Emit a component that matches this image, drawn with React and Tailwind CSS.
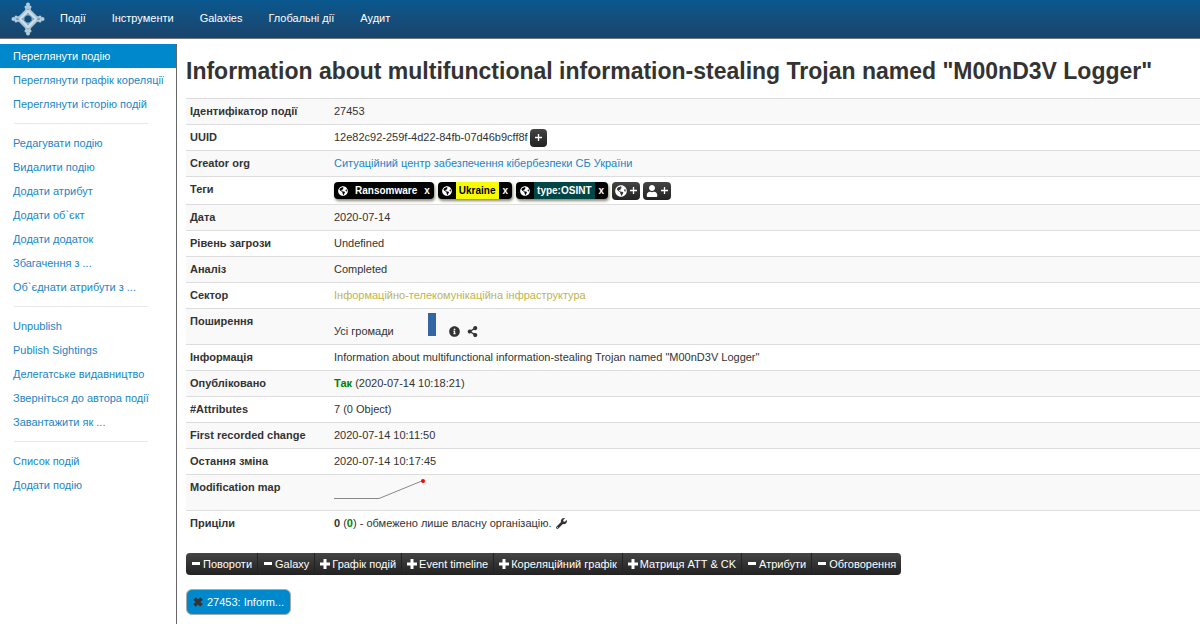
import React from 'react'
import { FaGlobeAmericas, FaInfoCircle, FaShareAlt, FaUser, FaWrench } from 'react-icons/fa'

const nav = ['Події', 'Інструменти', 'Galaxies', 'Глобальні дії', 'Аудит']

const menu = [
  ['Переглянути подію', 'Переглянути графік кореляції', 'Переглянути історію подій'],
  ['Редагувати подію', 'Видалити подію', 'Додати атрибут', 'Додати об`єкт', 'Додати додаток', 'Збагачення з ...', 'Об`єднати атрибути з ...'],
  ['Unpublish', 'Publish Sightings', 'Делегатське видавництво', 'Зверніться до автора події', 'Завантажити як ...'],
  ['Список подій', 'Додати подію'],
]

const tags = [
  { name: 'Ransomware', color: 'bg-black text-white' },
  { name: 'Ukraine', color: 'bg-[#f8fc00] text-black' },
  { name: 'type:OSINT', color: 'bg-[#004646] text-white' },
]

const toggles = [
  { name: 'Повороти', open: true },
  { name: 'Galaxy', open: true },
  { name: 'Графік подій' },
  { name: 'Event timeline' },
  { name: 'Кореляційний графік' },
  { name: 'Матриця ATT & CK' },
  { name: 'Атрибути', open: true },
  { name: 'Обговорення', open: true },
]

const title = 'Information about multifunctional information-stealing Trojan named "M00nD3V Logger"'

function Logo() {
  return (
    <svg viewBox="0 0 34 34" className="size-[34px]" aria-hidden="true">
      {/* diamond body, then the knobs on its four tips */}
      <path d="M15 4h4l1 4 6 6 4 1v4l-4 1-6 6-1 4h-4l-1-4-6-6-4-1v-4l4-1 6-6z" fill="#a9c4d4" />
      <g fill="#b4ccda">
        <circle cx="17" cy="2.500" r="2" /><circle cx="17" cy="31.500" r="2" />
        <circle cx="2.500" cy="17" r="2" /><circle cx="31.500" cy="17" r="2" />
        <circle cx="15" cy="5" r="1.500" /><circle cx="19" cy="5" r="1.500" />
        <circle cx="15" cy="29" r="1.500" /><circle cx="19" cy="29" r="1.500" />
        <circle cx="5" cy="15" r="1.500" /><circle cx="5" cy="19" r="1.500" />
        <circle cx="29" cy="15" r="1.500" /><circle cx="29" cy="19" r="1.500" />
      </g>
      <path d="M17 7v6M17 21v6M5 17h8M21 17h8" stroke="#57809f" />
      <path d="M17 9l8 8-8 8-8-8z" fill="none" stroke="#cfdfe8" strokeWidth="2" />
      <path d="M15.500 13h3l2.500 2.500v3L18.500 21h-3L13 18.500v-3z" fill="#0c4c7e" stroke="#8eafc4" />
    </svg>
  )
}

function Plus() {
  return <svg viewBox="0 0 10 10" className="size-[10px] shrink-0" aria-hidden="true"><path d="M5 0v10M0 5h10" stroke="currentColor" strokeWidth="3" /></svg>
}

function Minus() {
  return <svg viewBox="0 0 10 10" className="size-[10px] shrink-0" aria-hidden="true"><path d="M1 4.500h8" stroke="currentColor" strokeWidth="3" /></svg>
}

function Cross() {
  return <svg viewBox="0 0 10 10" className="size-[10px] shrink-0 text-[#333]" aria-hidden="true"><path d="M1.500 1.500l7 7M8.500 1.500l-7 7" stroke="currentColor" strokeWidth="3.500" /></svg>
}

function Row({ label, children }) {
  return (
    <tr className="border-t border-[#ddd] odd:bg-[#f9f9f9]">
      <th scope="row" className="w-[144px] px-1 py-1 text-left align-top font-bold">{label}</th>
      <td className="px-1 py-1 align-top">{children}</td>
    </tr>
  )
}

function DarkButton({ label, icon }) {
  return (
    <button aria-label={label} className="flex h-[18px] min-w-[17px] items-center justify-center gap-[3px] rounded bg-linear-to-b from-[#444] to-[#222] px-[3px] text-white">
      {icon}
      <svg viewBox="0 0 7 7" className="size-[7px]" aria-hidden="true"><path d="M3.500 0v7M0 3.500h7" stroke="currentColor" strokeWidth="1.300" /></svg>
    </button>
  )
}

function Tag({ name, color }) {
  return (
    <span className="flex h-[17px] items-stretch overflow-hidden rounded-sm bg-black text-[10px] leading-[17px] font-bold text-white shadow-[1px_2px_3px_#887]">
      <span className="flex items-center px-1"><FaGlobeAmericas size={10} /></span>
      <a href="#" className={`px-[3px] ${color}`}>{name}</a>
      <button aria-label={`Remove ${name}`} className="px-1">x</button>
    </span>
  )
}

export default function App() {
  return (
    <div className="flex min-h-screen flex-col bg-white font-['Liberation_Sans',Arial,sans-serif] text-[11px] leading-[17px] text-[#333]">
      <header className="flex h-[39px] shrink-0 items-center border-b border-[#777] bg-linear-to-b from-[#08588f] to-[#19446b] pl-[11px] text-white">
        <a href="#" aria-label="Home"><Logo /></a>
        <nav className="flex gap-[26px] pb-[2px] pl-[15px]">
          {nav.map(n => <a key={n} href="#">{n}</a>)}
        </nav>
      </header>

      <div className="flex flex-1 pt-[5px]">
        <aside className="w-[177px] shrink-0 border-r border-[#666]">
          {menu.map((group, g) => (
            <React.Fragment key={g}>
              {g > 0 && <hr className="my-[7px] mr-7 ml-[14px] border-[#e8e8e8]" />}
              <ul>
                {group.map((item, i) => (
                  <li key={item}>
                    <a href="#" className={`block h-6 pl-[13px] leading-6 whitespace-nowrap ${g === 0 && i === 0 ? 'bg-[#0088cc] text-white' : 'text-[#1a86c8]'}`}>{item}</a>
                  </li>
                ))}
              </ul>
            </React.Fragment>
          ))}
        </aside>

        <main className="min-w-0 flex-1 pl-[9px]">
          <h1 className="py-[11px] text-[23px] leading-8 font-bold">{title}</h1>

          <table className="w-full border-collapse">
            <tbody>
              <Row label="Ідентифікатор події">27453</Row>
              <Row label="UUID">
                <div className="flex h-[17px] items-center gap-[2px]">
                  12e82c92-259f-4d22-84fb-07d46b9cff8f
                  <DarkButton label="Extend event" />
                </div>
              </Row>
              <Row label="Creator org"><a href="#" className="text-[#1a86c8]">Ситуаційний центр забезпечення кібербезпеки СБ України</a></Row>
              <Row label="Теги">
                <div className="flex h-[19px] items-center gap-1">
                  {tags.map(t => <Tag key={t.name} {...t} />)}
                  <div className="flex gap-[3px]">
                    <DarkButton label="Add tag" icon={<FaGlobeAmericas size={12} />} />
                    <DarkButton label="Add local tag" icon={<FaUser size={12} />} />
                  </div>
                </div>
              </Row>
              <Row label="Дата">2020-07-14</Row>
              <Row label="Рівень загрози">Undefined</Row>
              <Row label="Аналіз">Completed</Row>
              <Row label="Сектор"><span className="text-[#bdb34f]">Інформаційно-телекомунікаційна інфраструктура</span></Row>
              <Row label="Поширення">
                <div className="flex h-[27px] items-end">
                  <span className="w-[94px]">Усі громади</span>
                  <svg className="h-[23px] w-2 self-start" aria-hidden="true"><rect width="8" height="23" fill="#3465a4" /></svg>
                  <button aria-label="Distribution info" className="ml-[13px] pb-[3px]"><FaInfoCircle size={11} /></button>
                  <button aria-label="Distribution graph" className="ml-[7px] pb-[3px]"><FaShareAlt size={11} /></button>
                </div>
              </Row>
              <Row label="Інформація">{title}</Row>
              <Row label="Опубліковано"><b className="text-[#008000]">Так</b> (2020-07-14 10:18:21)</Row>
              <Row label="#Attributes">7 (0 Object)</Row>
              <Row label="First recorded change">2020-07-14 10:11:50</Row>
              <Row label="Остання зміна">2020-07-14 10:17:45</Row>
              <Row label="Modification map">
                <svg width="93" height="27" viewBox="0 0 93 27" aria-hidden="true">
                  <path d="M0 19.500h45L89 1.500" fill="none" stroke="#888" />
                  <circle cx="89" cy="2" r="2" fill="#f00" />
                </svg>
              </Row>
              <Row label="Приціли">
                <div className="flex items-center gap-1">
                  <span><b>0</b> (<b className="text-[#008000]">0</b>) - обмежено лише власну організацію.</span>
                  <button aria-label="Advanced sightings"><FaWrench size={11} /></button>
                </div>
              </Row>
            </tbody>
          </table>

          <div className="mt-[17px] flex">
            <div className="flex h-[22px] overflow-hidden rounded bg-linear-to-b from-[#444] to-[#222] text-white">
              {toggles.map(({ name, open }) => (
                <button key={name} className="flex items-center gap-[2px] border-r border-[#222] px-[5px] whitespace-nowrap last:border-r-0">
                  {open ? <Minus /> : <Plus />}
                  {name}
                </button>
              ))}
            </div>
          </div>

          <div className="mt-[14px] flex">
            <a href="#" className="flex h-[26px] items-center gap-1 rounded-md border border-[#aaa] bg-[#0088cc] px-[6px] text-white">
              <Cross />
              27453: Inform...
            </a>
          </div>
        </main>
      </div>
    </div>
  )
}
